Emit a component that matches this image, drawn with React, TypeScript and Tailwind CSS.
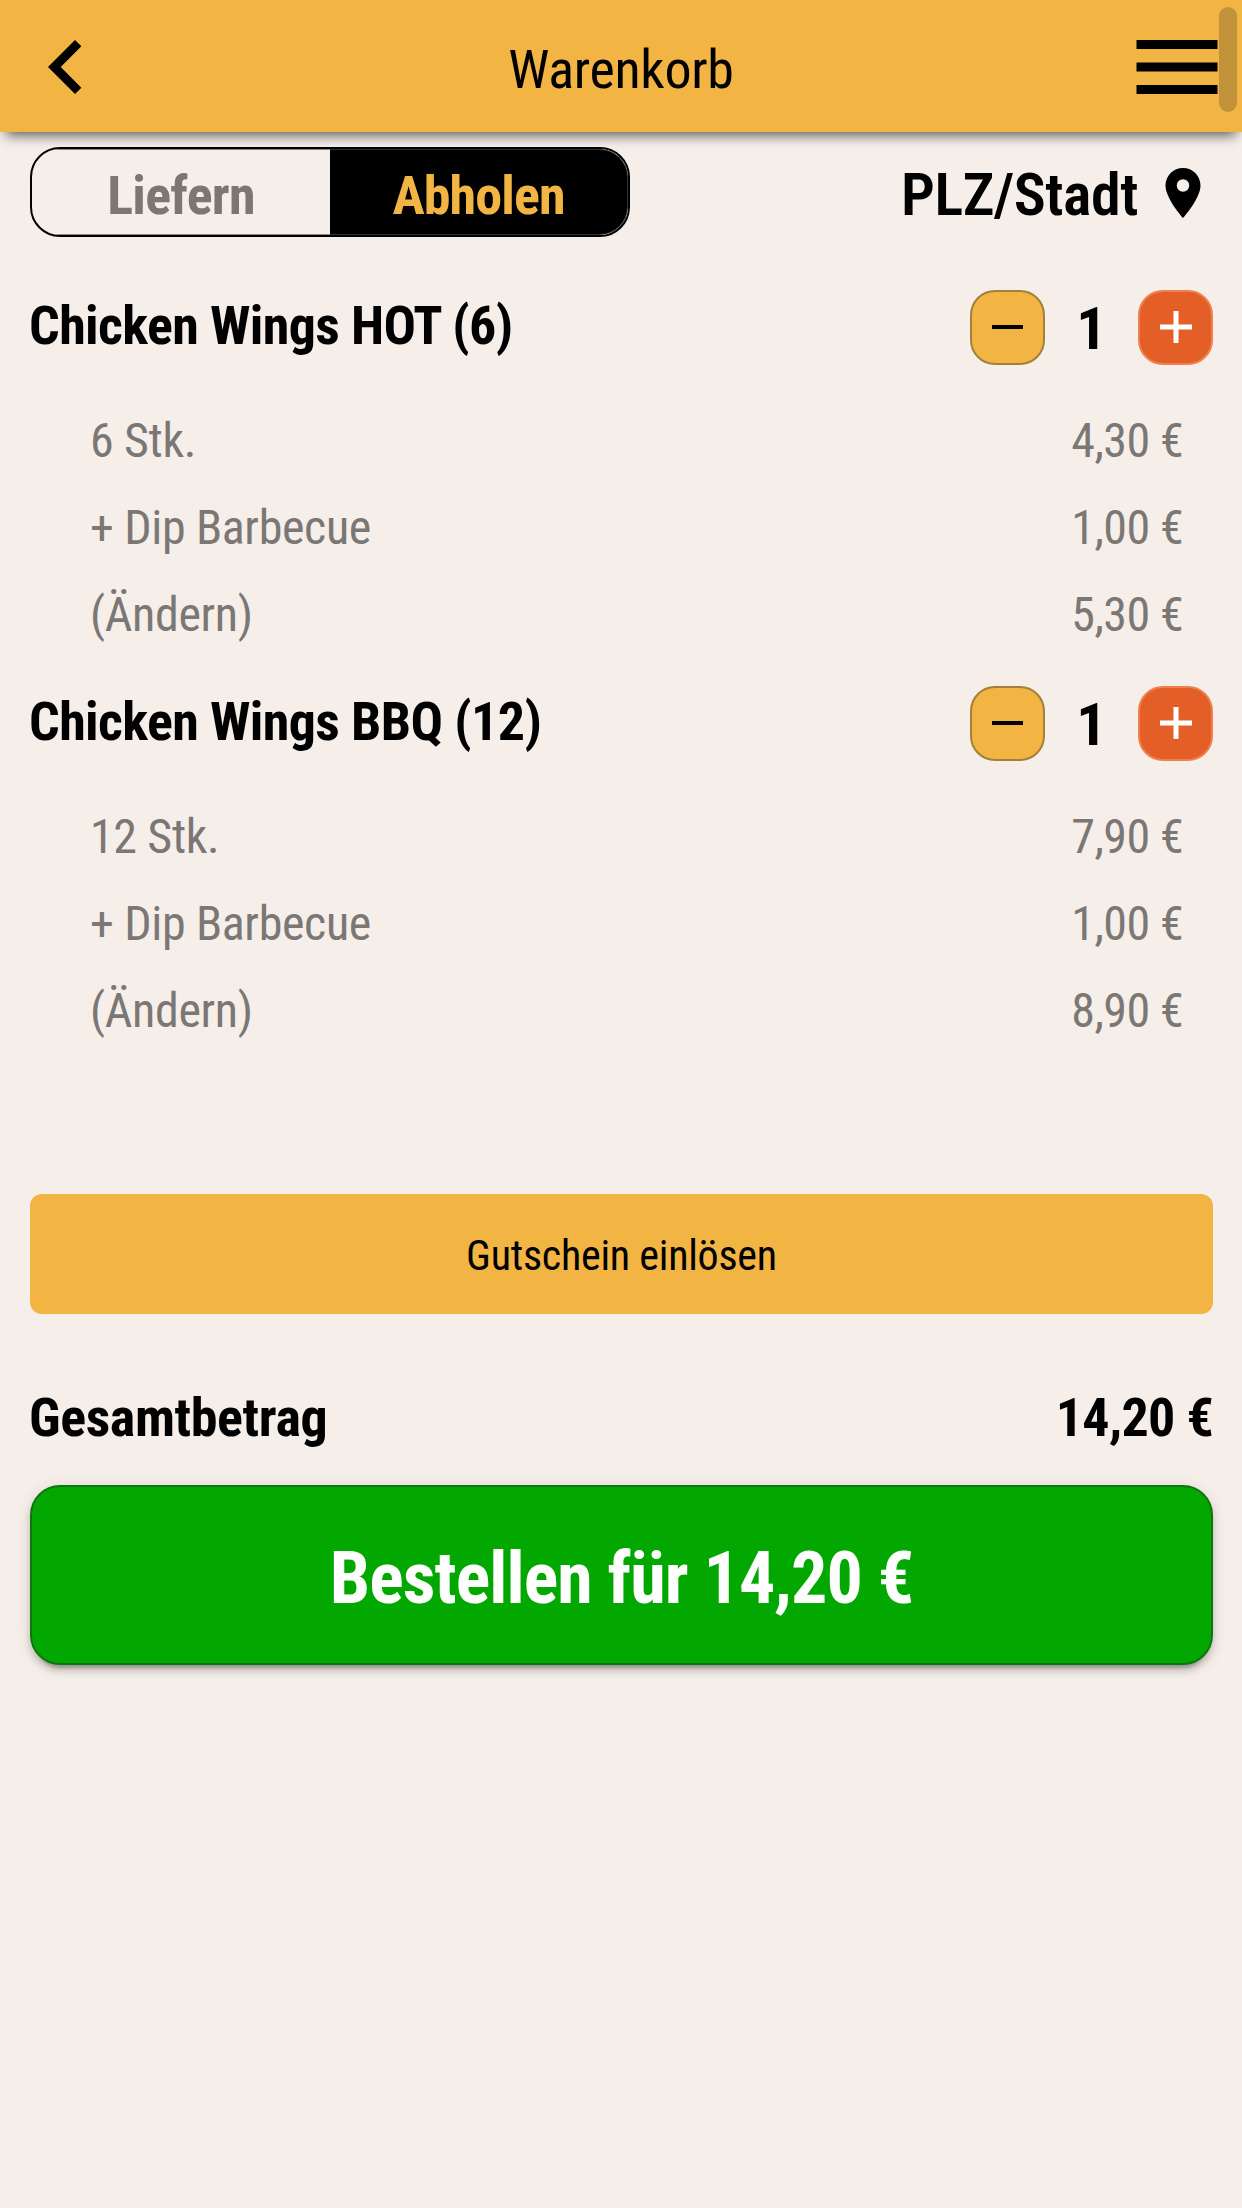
type Line = { label: string; price: string };
type Item = { name: string; count: number; lines: Line[] };

const items: Item[] = [
  {
    name: 'Chicken Wings HOT (6)',
    count: 1,
    lines: [
      { label: '6 Stk.', price: '4,30 €' },
      { label: '+ Dip Barbecue', price: '1,00 €' },
      { label: '(Ändern)', price: '5,30 €' },
    ],
  },
  {
    name: 'Chicken Wings BBQ (12)',
    count: 1,
    lines: [
      { label: '12 Stk.', price: '7,90 €' },
      { label: '+ Dip Barbecue', price: '1,00 €' },
      { label: '(Ändern)', price: '8,90 €' },
    ],
  },
];

function Header() {
  return (
    <header className="relative z-10 grid h-[132px] grid-cols-[1fr_auto_1fr] items-center bg-[#f2b443] shadow-[0_9px_12px_-6px_rgba(0,0,0,0.65)]">
      <button className="ml-3 mt-[2px] size-[108px]" aria-label="Zurück">
        <svg viewBox="0 0 24 24" className="size-full" fill="#000">
          <path d="M15.41 7.41 14 6l-6 6 6 6 1.41-1.41L10.83 12z" />
        </svg>
      </button>
      <h1 className="pt-[7px] text-[54px] leading-none tracking-[-0.3px]">Warenkorb</h1>
      <button className="mr-[11px] mt-[2px] size-[108px] justify-self-end" aria-label="Menü">
        <svg viewBox="0 0 24 24" className="size-full" fill="#000">
          <path d="M3 18h18v-2H3v2zm0-5h18v-2H3v2zm0-7v2h18V6H3z" />
        </svg>
      </button>
      <div className="absolute right-[5px] top-[7px] h-[105px] w-[18px] rounded-full bg-[#c1923a]" />
    </header>
  );
}

function ModeBar() {
  return (
    <div className="mt-[15px] flex h-[90px] items-center justify-between">
      <div className="grid h-full w-[600px] grid-cols-2 overflow-hidden rounded-[30px] border-2 border-black text-[54px] font-bold leading-none">
        <button className="flex items-center justify-center border-y border-[#8a8683] pt-2 tracking-[-0.7px] text-[#7b7775]">
          Liefern
        </button>
        <button className="flex items-center justify-center rounded-r-[28px] border-y border-r border-[#333] bg-black pt-2 tracking-[-0.9px] text-[#f2b443]">
          Abholen
        </button>
      </div>
      <button className="flex items-center gap-[15px]">
        <span className="pt-[5px] text-[60px] font-semibold leading-none tracking-[-0.5px]">PLZ/Stadt</span>
        <svg viewBox="0 0 24 24" className="mt-[2px] size-[60px]" fill="#000">
          <path d="M12 2C8.13 2 5 5.13 5 9c0 5.25 7 13 7 13s7-7.75 7-13c0-3.87-3.13-7-7-7zm0 9.500a2.500 2.500 0 1 1 0-5 2.500 2.500 0 0 1 0 5z" />
        </svg>
      </button>
    </div>
  );
}

function CartItem({ item }: { item: Item }) {
  return (
    <section className="flex flex-col gap-8">
      <div className="flex h-[75px] items-center justify-between">
        <h2 className="-ml-px pb-1 text-[54px] font-bold leading-none tracking-[-0.62px]">{item.name}</h2>
        <div className="flex items-center">
          <button
            className="flex size-[75px] items-center justify-center rounded-[25px] border-2 border-[#a3803a] bg-[#f2b443]"
            aria-label="Weniger"
          >
            <span className="mb-px h-1 w-[31px] bg-black" />
          </button>
          <span className="w-[93px] pt-[2px] text-center text-[60px] font-bold leading-none">{item.count}</span>
          <button
            className="flex size-[75px] items-center justify-center rounded-[25px] border-2 border-[#f08050] bg-[#e45e27]"
            aria-label="Mehr"
          >
            <svg viewBox="0 0 32 32" className="mb-px size-8" fill="#fff">
              <path d="M13.500 0h5v13.500H32v5H18.500V32h-5V18.500H0v-5h13.500z" />
            </svg>
          </button>
        </div>
      </div>
      <ul className="pl-[60px] pr-[30px] text-[48px] leading-[87px] text-[#7b7775]">
        {item.lines.map((line) => (
          <li key={line.label} className="flex justify-between">
            <span className="tracking-[-0.35px]">{line.label}</span>
            <span className="tracking-[-0.6px]">{line.price}</span>
          </li>
        ))}
      </ul>
    </section>
  );
}

export default function App() {
  return (
    <div className="min-h-[2208px] bg-[#f5eee9] font-[Roboto,sans-serif] text-black [font-stretch:75%]">
      <Header />
      <main className="pl-[30px] pr-[29px]">
        <ModeBar />
        <div className="mt-[53px] flex flex-col gap-7">
          {items.map((item) => (
            <CartItem key={item.name} item={item} />
          ))}
        </div>
        <button className="mt-[140px] flex h-[120px] w-full items-center justify-center rounded-xl bg-[#f2b443] pt-[3px] text-[42px] leading-none tracking-[-0.25px]">
          Gutschein einlösen
        </button>
        <div className="flex h-[171px] items-center justify-between pt-9 text-[54px] font-bold leading-none">
          <span className="-ml-px tracking-[-0.38px]">Gesamtbetrag</span>
          <span className="tracking-[-0.7px]">14,20 €</span>
        </div>
        <button className="flex h-[180px] w-full items-center justify-center rounded-[30px] border-2 border-[#0f760f] bg-[#02a800] pt-[8px] text-[72px] font-bold leading-none tracking-[-0.9px] text-white shadow-[0_9px_3px_-6px_rgba(0,0,0,0.2),0_6px_6px_rgba(0,0,0,0.14),0_3px_15px_rgba(0,0,0,0.12)]">
          Bestellen für 14,20 €
        </button>
      </main>
    </div>
  );
}
